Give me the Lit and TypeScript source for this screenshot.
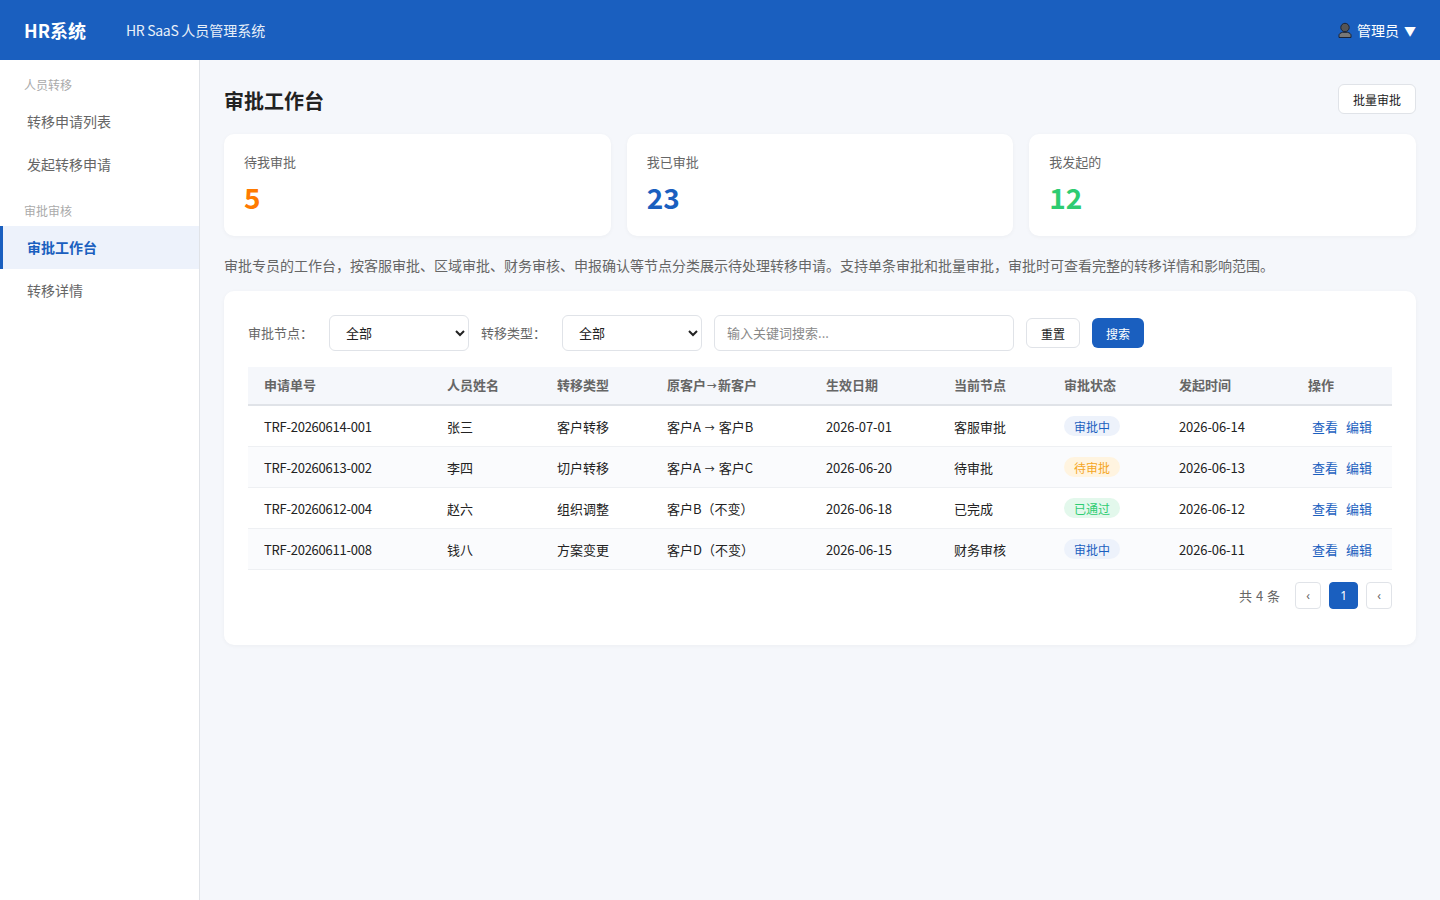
import { LitElement, html, css } from "lit";
import { customElement } from "lit/decorators.js";

type Row = {
  no: string;
  name: string;
  type: string;
  customer: string;
  date: string;
  node: string;
  status: string;
  tone: string;
  created: string;
};

const rows: Row[] = [
  { no: "TRF-20260614-001", name: "张三", type: "客户转移", customer: "客户A → 客户B", date: "2026-07-01", node: "客服审批", status: "审批中", tone: "info", created: "2026-06-14" },
  { no: "TRF-20260613-002", name: "李四", type: "切户转移", customer: "客户A → 客户C", date: "2026-06-20", node: "待审批", status: "待审批", tone: "warn", created: "2026-06-13" },
  { no: "TRF-20260612-004", name: "赵六", type: "组织调整", customer: "客户B（不变）", date: "2026-06-18", node: "已完成", status: "已通过", tone: "ok", created: "2026-06-12" },
  { no: "TRF-20260611-008", name: "钱八", type: "方案变更", customer: "客户D（不变）", date: "2026-06-15", node: "财务审核", status: "审批中", tone: "info", created: "2026-06-11" },
];

const heads = ["申请单号", "人员姓名", "转移类型", "原客户→新客户", "生效日期", "当前节点", "审批状态", "发起时间", "操作"];

// the arrow glyph of the CJK font is too long, so it gets its own size
const withArrow = (text: string) => {
  const [from, to] = text.split("→");
  return to === undefined ? text : html`${from}<span class="arrow">→</span>${to}`;
};

@customElement("app-root")
export class AppRoot extends LitElement {
  static styles = css`
    :host {
      display: block;
      min-height: 900px;
      background: #f5f7fb;
      color: #222;
      font-family: "Noto Sans CJK SC", "Noto Sans", sans-serif;
      font-size: 13px;
    }

    .topbar {
      height: 60px;
      background: #1a5fbf;
      color: #fff;
      display: flex;
      align-items: center;
      padding: 0 24px;
    }

    .logo {
      font-size: 18px;
      font-weight: 700;
      margin-right: 40px;
    }

    .subtitle {
      font-size: 14px;
      opacity: 0.9;
    }

    .subtitle-latin {
      letter-spacing: -0.3px;
    }

    .user {
      margin-left: auto;
      font-size: 14px;
      display: flex;
      align-items: center;
      gap: 5px;
    }

    .user svg {
      width: 14px;
      height: 16px;
    }

    .caret {
      font-size: 12px;
    }

    .layout {
      display: flex;
      min-height: 840px;
    }

    .sidebar {
      width: 199px;
      background: #fff;
      border-right: 1px solid #e0e3e8;
      padding-top: 16px;
      flex: none;
    }

    .nav-title {
      font-size: 12px;
      line-height: 18px;
      color: #aaa;
      padding: 0 24px;
      margin-bottom: 6px;
    }

    .nav-title.second {
      margin-top: 16px;
    }

    .nav-item {
      padding: 12px 24px;
      line-height: 19px;
      font-size: 14px;
      border-left: 3px solid transparent;
      color: #666;
    }

    .nav-item.active {
      background: #edf2fb;
      border-left-color: #1a5fbf;
      color: #1a5fbf;
      font-weight: 700;
    }

    .main {
      flex: 1;
      padding: 24px;
      min-width: 0;
    }

    .page-head {
      display: flex;
      align-items: center;
      justify-content: space-between;
      height: 30px;
      margin-bottom: 20px;
    }

    h1 {
      margin: 0;
      padding-top: 2px;
      font-size: 20px;
      font-weight: 700;
      color: #222;
    }

    .btn {
      font: inherit;
      font-size: 12px;
      height: 30px;
      padding: 0 14px;
      border: 1px solid #e0e3e8;
      border-radius: 6px;
      background: #fff;
      color: #222;
    }

    .btn.primary {
      background: #1a5fbf;
      border: none;
      color: #fff;
    }

    .stats {
      display: grid;
      grid-template-columns: repeat(3, 1fr);
      gap: 16px;
      margin-bottom: 19px;
    }

    .stat {
      height: 102px;
      box-sizing: border-box;
      background: #fff;
      border-radius: 10px;
      padding: 18px 20px;
      box-shadow: 0 1px 4px rgba(0, 0, 0, 0.04);
    }

    .stat-label {
      color: #666;
      font-size: 13px;
      line-height: 19px;
      margin-bottom: 7px;
    }

    .stat-value {
      font-size: 28px;
      font-weight: 700;
      line-height: 38px;
    }

    .orange { color: #ff7a00; }
    .blue { color: #1a5fbf; }
    .green { color: #2ecc71; }

    .desc {
      color: #666;
      font-size: 14px;
      line-height: 20px;
      margin: 0 0 16px;
    }

    .panel {
      background: #fff;
      border-radius: 10px;
      padding: 24px;
      box-shadow: 0 1px 4px rgba(0, 0, 0, 0.04);
    }

    .filters {
      display: flex;
      align-items: center;
      gap: 12px;
      margin-bottom: 16px;
    }

    .filters label {
      color: #666;
      font-size: 13px;
      padding-bottom: 2px;
      margin-right: 4px;
    }

    select {
      width: 140px;
      height: 36px;
      box-sizing: border-box;
      font: inherit;
      font-size: 13px;
      color: #222;
      background: #fff;
      border: 1px solid #e0e3e8;
      border-radius: 6px;
      padding: 0 12px 2px;
    }

    input {
      width: 300px;
      height: 36px;
      box-sizing: border-box;
      font: inherit;
      font-size: 13px;
      color: #222;
      border: 1px solid #e0e3e8;
      border-radius: 6px;
      padding: 0 12px 2px;
    }

    input::placeholder {
      color: #888;
    }

    table {
      width: 100%;
      border-collapse: collapse;
      table-layout: fixed;
    }

    .c1 { width: 183px; }
    .c2, .c3, .c6 { width: 110px; }
    .c4 { width: 159px; }
    .c5 { width: 128px; }
    .c7 { width: 115px; }
    .c8 { width: 129px; }
    .c9 { width: 100px; }

    th {
      height: 38px;
      box-sizing: border-box;
      padding: 0 16px 2px;
      text-align: left;
      font-size: 13px;
      font-weight: 700;
      color: #666;
      background: #f5f7fb;
      border-bottom: 2px solid #e0e3e8;
    }

    td {
      height: 41px;
      box-sizing: border-box;
      padding: 2px 16px 0;
      font-size: 13px;
      color: #222;
      border-bottom: 1px solid #eef0f3;
      white-space: nowrap;
    }

    td.status {
      padding-top: 0;
    }

    td.no {
      letter-spacing: -0.25px;
    }

    td.date {
      letter-spacing: -0.1px;
    }

    tbody tr:nth-child(even) td {
      background: #fafbfd;
    }

    .arrow {
      font-size: 10px;
      margin: 0 1px;
    }

    .badge {
      display: inline-block;
      width: 56px;
      text-align: center;
      font-size: 12px;
      line-height: 18px;
      padding-top: 2px;
      border-radius: 10px;
    }

    .badge.info { background: #edf2fb; color: #1a5fbf; }
    .badge.warn { background: #fff4e0; color: #f5a623; }
    .badge.ok { background: #e3f8ec; color: #2ecc71; }

    .link {
      color: #1a5fbf;
      margin-left: 4px;
      margin-right: 4px;
    }

    .pager {
      display: flex;
      align-items: center;
      justify-content: flex-end;
      gap: 8px;
      margin: 12px 0;
    }

    .total {
      color: #666;
      margin-right: 7px;
      word-spacing: 1px;
    }

    .page {
      height: 27px;
      min-width: 26px;
      box-sizing: border-box;
      padding: 0 10px;
      font-family: "Noto Sans", sans-serif;
      font-size: 12px;
      background: #fff;
      color: #666;
      border: 1px solid #e0e3e8;
      border-radius: 4px;
    }

    .page.current {
      background: #1a5fbf;
      border-color: #1a5fbf;
      color: #fff;
    }
  `;

  render() {
    return html`
      <header class="topbar">
        <span class="logo">HR系统</span>
        <span class="subtitle"><span class="subtitle-latin">HR SaaS </span>人员管理系统</span>
        <span class="user">
          <svg viewBox="0 0 14 16" aria-hidden="true">
            <path d="M1 15.5v-2.2c0-1.6 1.4-2.4 3.6-3h4.8c2.2.6 3.6 1.4 3.6 3v2.2z" fill="#777" stroke="#1c2333" />
            <circle cx="7" cy="5.5" r="4.2" fill="#555" stroke="#1c2333" />
          </svg>
          <span>管理员</span>
          <span class="caret">▼</span>
        </span>
      </header>
      <div class="layout">
        <aside class="sidebar">
          <div class="nav-title">人员转移</div>
          <div class="nav-item">转移申请列表</div>
          <div class="nav-item">发起转移申请</div>
          <div class="nav-title second">审批审核</div>
          <div class="nav-item active">审批工作台</div>
          <div class="nav-item">转移详情</div>
        </aside>
        <main class="main">
          <div class="page-head">
            <h1>审批工作台</h1>
            <button class="btn">批量审批</button>
          </div>
          <section class="stats">
            <div class="stat"><div class="stat-label">待我审批</div><div class="stat-value orange">5</div></div>
            <div class="stat"><div class="stat-label">我已审批</div><div class="stat-value blue">23</div></div>
            <div class="stat"><div class="stat-label">我发起的</div><div class="stat-value green">12</div></div>
          </section>
          <p class="desc">审批专员的工作台，按客服审批、区域审批、财务审核、申报确认等节点分类展示待处理转移申请。支持单条审批和批量审批，审批时可查看完整的转移详情和影响范围。</p>
          <section class="panel">
            <div class="filters">
              <label>审批节点：</label>
              <select><option>全部</option></select>
              <label>转移类型：</label>
              <select><option>全部</option></select>
              <input placeholder="输入关键词搜索..." />
              <button class="btn">重置</button>
              <button class="btn primary">搜索</button>
            </div>
            <table>
              <colgroup>
                ${heads.map((_, i) => html`<col class="c${i + 1}" />`)}
              </colgroup>
              <thead>
                <tr>${heads.map((h) => html`<th>${withArrow(h)}</th>`)}</tr>
              </thead>
              <tbody>
                ${rows.map(
                  (r) => html`<tr>
                    <td class="no">${r.no}</td>
                    <td>${r.name}</td>
                    <td>${r.type}</td>
                    <td>${withArrow(r.customer)}</td>
                    <td class="date">${r.date}</td>
                    <td>${r.node}</td>
                    <td class="status"><span class="badge ${r.tone}">${r.status}</span></td>
                    <td class="date">${r.created}</td>
                    <td><span class="link">查看</span><span class="link">编辑</span></td>
                  </tr>`
                )}
              </tbody>
            </table>
            <div class="pager">
              <span class="total">共 4 条</span>
              <button class="page">‹</button>
              <button class="page current">1</button>
              <button class="page">‹</button>
            </div>
          </section>
        </main>
      </div>
    `;
  }
}
